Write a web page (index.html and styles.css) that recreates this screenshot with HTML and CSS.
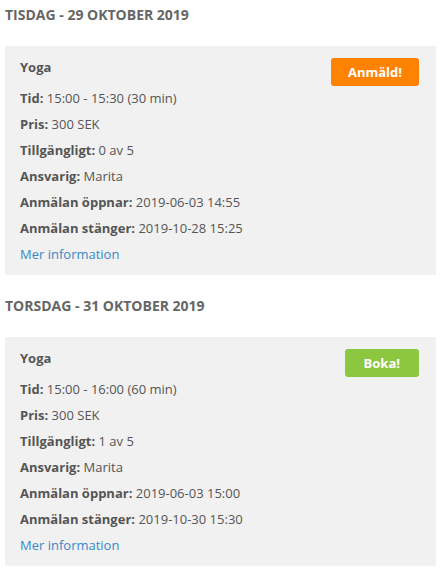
FILE: index.html
```html
<!DOCTYPE html>
<html lang="sv">
<head>
<meta charset="utf-8">
<title>Yoga</title>
<link rel="stylesheet" href="styles.css">
</head>
<body>
<section class="day">
  <h2 class="day-title">Tisdag - 29 oktober 2019</h2>
  <div class="card">
    <div class="card-head">
      <div class="card-title">Yoga</div>
      <button class="btn btn-orange">Anmäld!</button>
    </div>
    <ul class="info">
      <li><b>Tid:</b> 15:00 - 15:30 (30 min)</li>
      <li><b>Pris:</b> 300 SEK</li>
      <li><b>Tillgängligt:</b> 0 av 5</li>
      <li><b>Ansvarig:</b> Marita</li>
      <li><b>Anmälan öppnar:</b> 2019-06-03 14:55</li>
      <li><b>Anmälan stänger:</b> 2019-10-28 15:25</li>
      <li><a href="#" class="more">Mer information</a></li>
    </ul>
  </div>
</section>
<section class="day">
  <h2 class="day-title">Torsdag - 31 oktober 2019</h2>
  <div class="card">
    <div class="card-head">
      <div class="card-title">Yoga</div>
      <button class="btn btn-green">Boka!</button>
    </div>
    <ul class="info">
      <li><b>Tid:</b> 15:00 - 16:00 (60 min)</li>
      <li><b>Pris:</b> 300 SEK</li>
      <li><b>Tillgängligt:</b> 1 av 5</li>
      <li><b>Ansvarig:</b> Marita</li>
      <li><b>Anmälan öppnar:</b> 2019-06-03 15:00</li>
      <li><b>Anmälan stänger:</b> 2019-10-30 15:30</li>
      <li><a href="#" class="more">Mer information</a></li>
    </ul>
  </div>
</section>
</body>
</html>
```
FILE: styles.css
```css
* { box-sizing: border-box; }
html, body { background: #fff; }
body {
  margin: 0;
  padding: 5px;
  font-family: "Open Sans", "Liberation Sans", sans-serif;
  font-size: 13px;
  color: #555;
}
.day + .day { margin-top: 21px; }
.day-title {
  margin: 0 0 21px;
  font-size: 14px;
  line-height: 20px;
  font-weight: 700;
  text-transform: uppercase;
  color: #666;
}
.card {
  background: #f1f1f1;
  padding: 12px 17px 8px 15px;
}
.card-head {
  display: flex;
  justify-content: space-between;
  align-items: flex-start;
  height: 27px;
}
.card-title {
  font-weight: 700;
  line-height: 18px;
  color: #555;
}
.btn {
  border: 0;
  border-radius: 3px;
  height: 28px;
  padding: 0 18px;
  font-family: inherit;
  font-size: 13px;
  font-weight: 700;
  color: #fff;
  cursor: pointer;
}
.btn-orange { background: #ff8200; padding: 0 17px; }
.btn-green { background: #8dc63f; padding: 0 19px; }
.info {
  list-style: none;
  margin: 0;
  padding: 0;
}
.info li {
  line-height: 26px;
}
.info b { font-weight: 700; }
.more {
  color: #3a87c8;
  text-decoration: none;
}
```
